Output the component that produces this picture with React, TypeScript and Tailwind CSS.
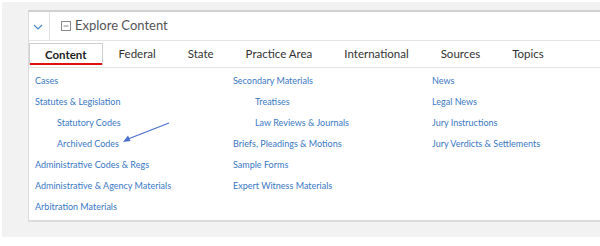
const tabs = ["Content", "Federal", "State", "Practice Area", "International", "Sources", "Topics"];

type Item = { label: string; indent?: boolean };

const columns: Item[][] = [
  [
    { label: "Cases" },
    { label: "Statutes & Legislation" },
    { label: "Statutory Codes", indent: true },
    { label: "Archived Codes", indent: true },
    { label: "Administrative Codes & Regs" },
    { label: "Administrative & Agency Materials" },
    { label: "Arbitration Materials" },
  ],
  [
    { label: "Secondary Materials" },
    { label: "Treatises", indent: true },
    { label: "Law Reviews & Journals", indent: true },
    { label: "Briefs, Pleadings & Motions" },
    { label: "Sample Forms" },
    { label: "Expert Witness Materials" },
  ],
  [
    { label: "News" },
    { label: "Legal News" },
    { label: "Jury Instructions" },
    { label: "Jury Verdicts & Settlements" },
  ],
];

export default function App() {
  return (
    <div className="w-[600px] h-[246px] overflow-hidden bg-white pt-[2px] pl-[2px] font-['Lato','Liberation_Sans',sans-serif]">
      <div className="h-[235px] w-[598px] bg-[#f2f2f2] pt-[8px] pl-[26px]">
        <div className="relative h-[212px] w-[572px] border-t-2 border-l border-b-2 border-t-[#d0d0d0] border-l-[#dcdcdc] border-b-[#dcdcdc] bg-white">
          {/* header */}
          <div className="flex h-[28px] items-center">
            <div className="flex h-full w-[21px] items-center justify-center border-r border-[#e2e2e2]">
              <svg width="10" height="6" viewBox="0 0 10 6" className="ml-[-2px] mt-[2px]">
                <path d="M1 1 L5 5 L9 1" fill="none" stroke="#4a86c8" strokeWidth="1.2" />
              </svg>
            </div>
            <svg width="10" height="10" viewBox="0 0 10 10" className="ml-[11px]">
              <rect x="0.5" y="0.5" width="9" height="9" fill="none" stroke="#8a8a8a" />
              <path d="M2.5 5 H7.5" stroke="#8a8a8a" />
            </svg>
            <span className="ml-[4px] text-[13px] text-[#555555]">Explore Content</span>
          </div>
          {/* tabs */}
          <div className="flex h-[28px] items-end border-t border-b border-[#e4e4e4]">
            {tabs.map((t, i) =>
              i === 0 ? (
                <div
                  key={t}
                  className="mb-[2px] flex h-[22px] items-center border border-b-0 border-[#cfcfcf] px-[15px] text-[11.5px] font-bold text-[#222] shadow-[inset_0_-2px_0_#e01010]"
                >
                  {t}
                </div>
              ) : (
                <div key={t} className="mb-[2px] flex h-[22px] items-center px-[16px] text-[11.5px] text-[#333]">
                  {t}
                </div>
              )
            )}
          </div>
          {/* links */}
          <div className="flex pl-[6px] pt-[2px]">
            {columns.map((col, ci) => (
              <div key={ci} className={ci === 0 ? "w-[198px]" : ci === 1 ? "w-[199px]" : "w-[150px]"}>
                {col.map((it) => (
                  <div
                    key={it.label}
                    className={`h-[21px] whitespace-nowrap text-[9px] leading-[21px] text-[#3a78c4] ${it.indent ? "pl-[22px]" : ""}`}
                  >
                    {it.label}
                  </div>
                ))}
              </div>
            ))}
          </div>
          {/* annotation arrow */}
          <svg className="absolute left-[89px] top-[109px]" width="52" height="26" viewBox="0 0 52 26">
            <path d="M51 2 L10 18" stroke="#4a6fd0" strokeWidth="1.2" />
            <path d="M5 21 L10 14.5 L12.5 20 Z" fill="#4a6fd0" />
          </svg>
        </div>
      </div>
    </div>
  );
}
